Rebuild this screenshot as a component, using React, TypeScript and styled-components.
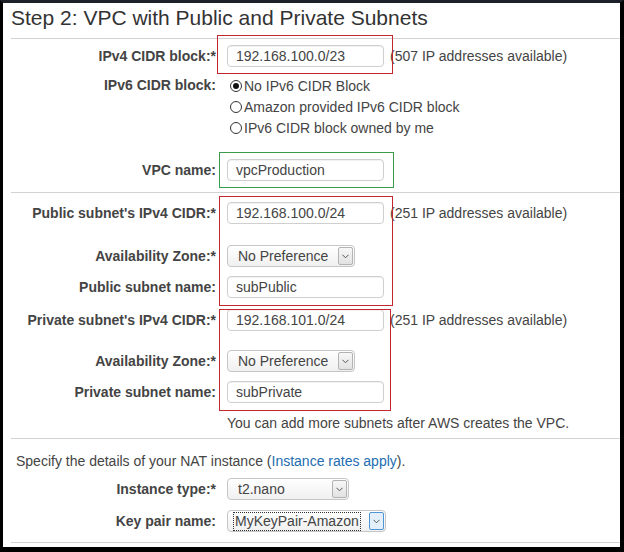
import React from "react";
import styled, { createGlobalStyle } from "styled-components";

const Global = createGlobalStyle`
  html, body { margin: 0; padding: 0; background: #000; }
  body { font-family: "Liberation Sans", Arial, sans-serif; }
`;

const Page = styled.div`
  position: relative;
  box-sizing: border-box;
  width: 624px;
  height: 552px;
  background: #fff;
  border-top: 3px solid #1b2029;
  border-left: 3px solid #000;
  border-right: 4px solid #000;
  border-bottom: 5px solid #000;
  display: flex;
  flex-direction: column;
  color: #444;
  font-size: 14px;
  overflow: hidden;
`;

const Title = styled.h2`
  margin: 0 0 0 8px;
  padding: 3px 0 8px 0;
  font-weight: 400;
  font-size: 21px;
  line-height: 24px;
  color: #333;
  border-bottom: 1px solid #d2d2d2;
`;

const Section = styled.div<{ $pt: number; $pb: number }>`
  display: flex;
  flex-direction: column;
  margin-left: 8px;
  padding-top: ${(p) => p.$pt}px;
  padding-bottom: ${(p) => p.$pb}px;
  border-bottom: 1px solid #d2d2d2;
`;

const Row = styled.div<{ $h: number; $mt?: number; $top?: boolean }>`
  display: grid;
  grid-template-columns: 205px auto auto;
  column-gap: 11px;
  justify-content: start;
  align-items: ${(p) => (p.$top ? "start" : "center")};
  height: ${(p) => p.$h}px;
  margin-top: ${(p) => p.$mt ?? 0}px;
`;

const Label = styled.div<{ $top?: boolean }>`
  font-weight: 700;
  text-align: right;
  color: #444;
  white-space: nowrap;
  line-height: ${(p) => (p.$top ? "21px" : "normal")};
  margin-top: ${(p) => (p.$top ? "2px" : "0")};
`;

const Note = styled.span`
  margin-left: -5px;
  white-space: nowrap;
`;

const TextInput = styled.div<{ $w?: number }>`
  box-sizing: border-box;
  width: ${(p) => p.$w ?? 157}px;
  height: 22px;
  padding: 0 8px;
  border: 1px solid #cfcfcf;
  border-radius: 4px;
  box-shadow: inset 0 1px 1px rgba(0, 0, 0, 0.06);
  display: flex;
  align-items: center;
  color: #444;
  white-space: nowrap;
`;

const Select = styled.div<{ $w: number }>`
  box-sizing: border-box;
  width: ${(p) => p.$w}px;
  height: 22px;
  padding: 0 1px 0 9px;
  border: 1px solid #c6c6c6;
  border-radius: 4px;
  background: linear-gradient(#ffffff, #f0f0f0);
  display: flex;
  align-items: center;
  justify-content: space-between;
  color: #444;
  white-space: nowrap;
`;

const SelectText = styled.span<{ $focus?: boolean }>`
  padding: 0 1px;
  outline: ${(p) => (p.$focus ? "1px dotted #333" : "none")};
  margin-left: ${(p) => (p.$focus ? "-3px" : "0")};
  line-height: 17px;
`;

const Arrow = styled.span<{ $focus?: boolean }>`
  box-sizing: border-box;
  width: 15px;
  height: 18px;
  border: 1px solid ${(p) => (p.$focus ? "#4d94d8" : "#b3b3b3")};
  border-radius: 2px;
  background: ${(p) => (p.$focus ? "#e3f0fb" : "linear-gradient(#f7f7f7, #e2e2e2)")};
  display: flex;
  align-items: center;
  justify-content: center;
`;

const Chevron = () => (
  <svg width="7" height="5" viewBox="0 0 7 5">
    <path d="M0.5 0.8 L3.5 3.8 L6.5 0.8" fill="none" stroke="#555" strokeWidth="1" />
  </svg>
);

const RadioGroup = styled.div`
  display: flex;
  flex-direction: column;
  margin-top: 2px;
  margin-left: 3px;
`;

const RadioRow = styled.div`
  display: flex;
  align-items: center;
  height: 21px;
  gap: 2px;
  white-space: nowrap;
`;

const RadioCircle = styled.span<{ $on?: boolean }>`
  box-sizing: border-box;
  width: 12px;
  height: 12px;
  border: 1px solid #333;
  border-radius: 50%;
  background: #fff;
  display: flex;
  align-items: center;
  justify-content: center;
  &::after {
    content: "";
    display: ${(p) => (p.$on ? "block" : "none")};
    width: 6px;
    height: 6px;
    border-radius: 50%;
    background: #111;
  }
`;

const Plain = styled.div`
  margin-left: 5px;
  height: 20px;
  display: flex;
  align-items: center;
  white-space: nowrap;
`;

const Link = styled.a`
  color: #226db1;
  text-decoration: none;
`;

const Mark = styled.div<{ $x: number; $y: number; $w: number; $h: number; $c: string }>`
  position: absolute;
  left: ${(p) => p.$x}px;
  top: ${(p) => p.$y}px;
  width: ${(p) => p.$w}px;
  height: ${(p) => p.$h}px;
  box-sizing: border-box;
  border: 1px solid ${(p) => p.$c};
  pointer-events: none;
`;

const RED = "#c1272d";
const GREEN = "#3a9b4c";

export default function App() {
  return (
    <>
      <Global />
      <Page>
        <Title>Step 2: VPC with Public and Private Subnets</Title>

        <Section $pt={0} $pb={11}>
          <Row $h={34}>
            <Label>IPv4 CIDR block:*</Label>
            <TextInput>192.168.100.0/23</TextInput>
            <Note>(507 IP addresses available)</Note>
          </Row>
          <Row $h={65} $top>
            <Label $top>IPv6 CIDR block:</Label>
            <RadioGroup>
              <RadioRow>
                <RadioCircle $on />
                No IPv6 CIDR Block
              </RadioRow>
              <RadioRow>
                <RadioCircle />
                Amazon provided IPv6 CIDR block
              </RadioRow>
              <RadioRow>
                <RadioCircle />
                IPv6 CIDR block owned by me
              </RadioRow>
            </RadioGroup>
          </Row>
          <Row $h={22} $mt={21}>
            <Label>VPC name:</Label>
            <TextInput>vpcProduction</TextInput>
          </Row>
        </Section>

        <Section $pt={9} $pb={5}>
          <Row $h={22}>
            <Label>Public subnet's IPv4 CIDR:*</Label>
            <TextInput>192.168.100.0/24</TextInput>
            <Note>(251 IP addresses available)</Note>
          </Row>
          <Row $h={22} $mt={21}>
            <Label>Availability Zone:*</Label>
            <Select $w={128}>
              <SelectText>No Preference</SelectText>
              <Arrow>
                <Chevron />
              </Arrow>
            </Select>
          </Row>
          <Row $h={22} $mt={9}>
            <Label>Public subnet name:</Label>
            <TextInput>subPublic</TextInput>
          </Row>
          <Row $h={22} $mt={11}>
            <Label>Private subnet's IPv4 CIDR:*</Label>
            <TextInput>192.168.101.0/24</TextInput>
            <Note>(251 IP addresses available)</Note>
          </Row>
          <Row $h={22} $mt={19}>
            <Label>Availability Zone:*</Label>
            <Select $w={128}>
              <SelectText>No Preference</SelectText>
              <Arrow>
                <Chevron />
              </Arrow>
            </Select>
          </Row>
          <Row $h={22} $mt={9}>
            <Label>Private subnet name:</Label>
            <TextInput>subPrivate</TextInput>
          </Row>
          <Row $h={20} $mt={10}>
            <span />
            <span>You can add more subnets after AWS creates the VPC.</span>
          </Row>
        </Section>

        <Section $pt={12} $pb={12}>
          <Plain>
            Specify the details of your NAT instance (<Link>Instance rates apply</Link>).
          </Plain>
          <Row $h={22} $mt={7}>
            <Label>Instance type:*</Label>
            <Select $w={122}>
              <SelectText>t2.nano</SelectText>
              <Arrow>
                <Chevron />
              </Arrow>
            </Select>
          </Row>
          <Row $h={20} $mt={10}>
            <Label>Key pair name:</Label>
            <Select $w={159}>
              <SelectText $focus>MyKeyPair-Amazon</SelectText>
              <Arrow $focus>
                <Chevron />
              </Arrow>
            </Select>
          </Row>
        </Section>

        <Mark $x={214} $y={32} $w={176} $h={39} $c={RED} />
        <Mark $x={216} $y={149} $w={175} $h={36} $c={GREEN} />
        <Mark $x={216} $y={193} $w={174} $h={110} $c={RED} />
        <Mark $x={216} $y={306} $w={172} $h={102} $c={RED} />
      </Page>
    </>
  );
}
